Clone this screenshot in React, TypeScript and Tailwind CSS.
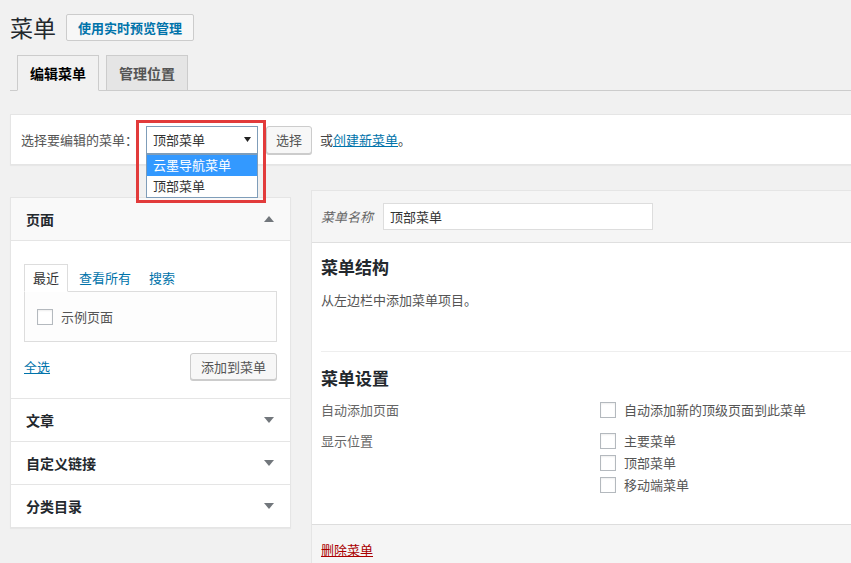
const FONT = '"Noto Sans CJK SC", "Microsoft YaHei", "Liberation Sans", sans-serif';

function Checkbox() {
  return <span className="block h-4 w-4 shrink-0 border border-[#b4b9be] bg-white shadow-[inset_0_1px_2px_rgba(0,0,0,0.07)]" />;
}

function Caret({ up = false }: { up?: boolean }) {
  return (
    <svg width="10" height="6" viewBox="0 0 10 6" className="text-[#72777c]" aria-hidden="true">
      <path d={up ? 'M0 6 L5 0 L10 6 Z' : 'M0 0 L10 0 L5 6 Z'} fill="currentColor" />
    </svg>
  );
}

function Accordion({ title }: { title: string }) {
  return (
    <div className="flex h-[43px] items-center justify-between border-t border-[#e5e5e5] pl-[15px] pr-[16px]">
      <span className="text-[14px] font-semibold text-[#23282d]">{title}</span>
      <Caret />
    </div>
  );
}

export default function App() {
  return (
    <div
      className="relative h-[563px] w-[851px] overflow-hidden bg-[#f1f1f1] pl-[10px] text-[13px] text-[#444]"
      style={{ fontFamily: FONT }}
    >
      {/* Title */}
      <div className="flex items-center gap-[10px] pt-[14px]">
        <h1 className="text-[23px] leading-[27px] font-normal text-[#23282d]">菜单</h1>
        <span className="flex h-[27px] w-[128px] items-center justify-center rounded-[2px] border border-[#ccc] bg-[#f7f7f7] text-[13px] font-semibold text-[#0073aa]">
          使用实时预览管理
        </span>
      </div>

      {/* Tabs */}
      <div className="mt-[14px] flex h-[36px] items-end gap-[7px] border-b border-[#ccc] pl-[7px]">
        <span className="-mb-px flex h-[36px] w-[82px] items-center justify-center border border-[#ccc] border-b-[#f1f1f1] bg-[#f1f1f1] text-[14px] font-semibold text-black">
          编辑菜单
        </span>
        <span className="-mb-px flex h-[36px] w-[82px] items-center justify-center border border-[#ccc] bg-[#e5e5e5] text-[14px] font-semibold text-[#555]">
          管理位置
        </span>
      </div>

      {/* Manage menus */}
      <div className="mt-[23px] flex h-[51px] w-[860px] items-center border border-[#e5e5e5] bg-white pl-[10px] shadow-[0_1px_1px_rgba(0,0,0,0.04)]">
        <span className="text-[#555]">选择要编辑的菜单：</span>
        <div className="relative ml-[8px]">
          <div className="flex h-[28px] w-[112px] items-center justify-between border border-[#7f9db9] bg-white pl-[6px] pr-[6px] text-[#333]">
            <span>顶部菜单</span>
            <svg width="7" height="5" viewBox="0 0 7 5" aria-hidden="true">
              <path d="M0 0 L7 0 L3.5 5 Z" fill="#222" />
            </svg>
          </div>
          <div className="absolute left-0 top-[28px] z-10 w-[112px] border border-[#7f9db9] bg-white">
            <div className="flex h-[21px] items-center bg-[#3399ff] pl-[6px] text-white">云墨导航菜单</div>
            <div className="flex h-[21px] items-center pl-[6px] text-[#333]">顶部菜单</div>
          </div>
          <div className="pointer-events-none absolute -left-[10px] -top-[6px] z-20 h-[83px] w-[130px] border-[3px] border-[#e23b3b]" />
        </div>
        <span className="ml-[8px] flex h-[28px] w-[46px] items-center justify-center rounded-[3px] border border-[#ccc] bg-[#f7f7f7] text-[#555] shadow-[0_1px_0_#ccc]">
          选择
        </span>
        <span className="ml-[8px] text-[#444]">
          或<span className="text-[#0073aa] underline">创建新菜单</span>。
        </span>
      </div>

      {/* Columns */}
      <div className="mt-[25px] flex items-start gap-[20px]">
        {/* Left column */}
        <div className="mt-[7px] w-[281px] shrink-0 border border-[#e5e5e5] bg-white shadow-[0_1px_1px_rgba(0,0,0,0.04)]">
          <div className="flex h-[43px] items-center justify-between border-b border-[#e5e5e5] bg-[#f9f9f9] pl-[15px] pr-[16px]">
            <span className="text-[14px] font-semibold text-[#23282d]">页面</span>
            <Caret up />
          </div>
          <div className="px-[13px] pb-[18px] pt-[23px]">
            <div className="flex h-[27px] items-end">
              <span className="-mb-px flex h-[28px] w-[44px] items-center justify-center border border-[#ddd] border-b-white bg-white text-[#333]">
                最近
              </span>
              <span className="flex h-[27px] items-center pl-[11px] text-[#0073aa]">查看所有</span>
              <span className="flex h-[27px] items-center pl-[18px] text-[#0073aa]">搜索</span>
            </div>
            <div className="flex h-[51px] items-center gap-[8px] border border-[#ddd] bg-[#fdfdfd] pl-[12px]">
              <Checkbox />
              <span className="text-[#555]">示例页面</span>
            </div>
            <div className="mt-[11px] flex items-center justify-between">
              <span className="text-[#0073aa] underline">全选</span>
              <span className="flex h-[27px] w-[87px] items-center justify-center rounded-[3px] border border-[#ccc] bg-[#f7f7f7] text-[#555] shadow-[0_1px_0_#ccc]">
                添加到菜单
              </span>
            </div>
          </div>
          <Accordion title="文章" />
          <Accordion title="自定义链接" />
          <Accordion title="分类目录" />
        </div>

        {/* Right column */}
        <div className="w-[560px] shrink-0 border border-[#e5e5e5] bg-white">
          <div className="flex h-[52px] items-center border-b border-[#dfdfdf] bg-[#f5f5f5] pl-[9px]">
            <span className="italic text-[#666]">菜单名称</span>
            <span className="ml-[10px] flex h-[27px] w-[270px] items-center border border-[#ddd] bg-white pl-[6px] text-[#333]">
              顶部菜单
            </span>
          </div>
          <div className="pl-[9px]">
            <div className="pt-[12px] text-[17px] font-semibold leading-[24px] text-[#23282d]">菜单结构</div>
            <div className="mt-[12px] leading-[18px] text-[#555]">从左边栏中添加菜单项目。</div>
            <div className="mt-[42px] border-t border-[#eee]" />
            <div className="pt-[14px] text-[17px] font-semibold leading-[24px] text-[#23282d]">菜单设置</div>
            <div className="mt-[10px] flex">
              <span className="w-[279px] text-[#666]">自动添加页面</span>
              <div className="flex items-center gap-[8px]">
                <Checkbox />
                <span className="text-[#555]">自动添加新的顶级页面到此菜单</span>
              </div>
            </div>
            <div className="mt-[11px] flex pb-[30px]">
              <span className="w-[279px] text-[#666]">显示位置</span>
              <div className="flex flex-col gap-[4px] pt-[1px]">
                {['主要菜单', '顶部菜单', '移动端菜单'].map((label) => (
                  <div key={label} className="flex h-[18px] items-center gap-[8px]">
                    <Checkbox />
                    <span className="text-[#555]">{label}</span>
                  </div>
                ))}
              </div>
            </div>
          </div>
          <div className="h-[40px] border-t border-[#ddd] bg-[#f5f5f5] pl-[9px] pt-[15px]">
            <span className="text-[#a00] underline">删除菜单</span>
          </div>
        </div>
      </div>
    </div>
  );
}
